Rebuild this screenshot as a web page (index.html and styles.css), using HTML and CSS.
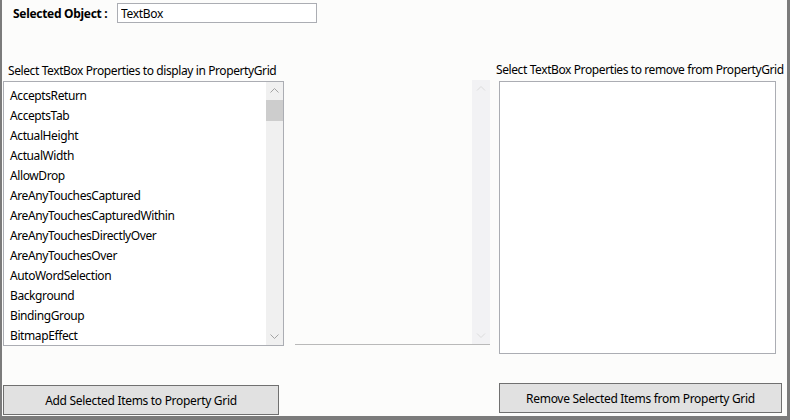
FILE: index.html
```html
<!DOCTYPE html>
<html lang="en">
<head>
    <meta charset="UTF-8">
    <title>PropertyGrid Properties</title>
    <link rel="stylesheet" href="styles.css">
</head>
<body>
    <div class="window">
        <div class="top-row">
            <span class="object-label">Selected Object :</span>
            <input type="text" class="object-input" value="TextBox">
        </div>

        <div class="columns">
            <div class="column column-left">
                <div class="list-title">Select TextBox Properties to display in PropertyGrid</div>
                <div class="listbox listbox-left">
                    <ul class="items">
                        <li>AcceptsReturn</li>
                        <li>AcceptsTab</li>
                        <li>ActualHeight</li>
                        <li>ActualWidth</li>
                        <li>AllowDrop</li>
                        <li>AreAnyTouchesCaptured</li>
                        <li>AreAnyTouchesCapturedWithin</li>
                        <li>AreAnyTouchesDirectlyOver</li>
                        <li>AreAnyTouchesOver</li>
                        <li>AutoWordSelection</li>
                        <li>Background</li>
                        <li>BindingGroup</li>
                        <li>BitmapEffect</li>
                    </ul>
                    <div class="scrollbar">
                        <svg class="arrow" width="17" height="17" viewBox="0 0 17 17">
                            <polyline points="4.5,10.5 8.5,6.5 12.5,10.5" fill="none" stroke="#a3a3a3" stroke-width="1"/>
                        </svg>
                        <div class="thumb"></div>
                        <div class="track"></div>
                        <svg class="arrow" width="17" height="17" viewBox="0 0 17 17">
                            <polyline points="4.5,6.5 8.5,10.5 12.5,6.5" fill="none" stroke="#a3a3a3" stroke-width="1"/>
                        </svg>
                    </div>
                </div>
                <button class="action-btn btn-add">Add Selected Items to Property Grid</button>
            </div>

            <div class="column column-middle">
                <div class="ghost">
                    <div class="ghost-bar">
                        <svg class="arrow" width="18" height="17" viewBox="0 0 18 17">
                            <polyline points="5,10.5 9,6.5 13,10.5" fill="none" stroke="#dcdcdc" stroke-width="1"/>
                        </svg>
                        <div class="track"></div>
                        <svg class="arrow" width="18" height="17" viewBox="0 0 18 17">
                            <polyline points="5,6.5 9,10.5 13,6.5" fill="none" stroke="#dcdcdc" stroke-width="1"/>
                        </svg>
                    </div>
                </div>
                <div class="ghost-line"></div>
            </div>

            <div class="column column-right">
                <div class="list-title">Select TextBox Properties to remove from PropertyGrid</div>
                <div class="listbox listbox-right"></div>
                <button class="action-btn btn-remove">Remove Selected Items from Property Grid</button>
            </div>
        </div>
    </div>
</body>
</html>
```

FILE: styles.css
```css
* {
    box-sizing: border-box;
}

body {
    margin: 0;
    font-family: 'Noto Sans', sans-serif;
    font-size: 12px;
    color: #000;
    background-color: #fff;
}

.window {
    width: 790px;
    height: 420px;
    background-color: #fcfcfb;
    border-left: 2px solid #7b7b7b;
    border-right: 3px solid #7b7b7b;
    border-bottom: 4px solid #7b7b7b;
    display: flex;
    flex-direction: column;
}

.top-row {
    display: flex;
    align-items: center;
    height: 20px;
    margin-top: 3px;
}

.object-label {
    font-weight: bold;
    margin-left: 11px;
    width: 104px;
    letter-spacing: -0.3px;
}

.object-input {
    width: 200px;
    height: 20px;
    border: 1px solid #abadb3;
    background-color: #fff;
    font-family: inherit;
    font-size: 12px;
    padding: 0 3px;
    color: #000;
    letter-spacing: -0.3px;
}

.columns {
    display: flex;
    margin-top: 36px;
    flex: 1;
}

.column {
    display: flex;
    flex-direction: column;
    flex-shrink: 0;
}

.list-title {
    height: 22px;
    padding-top: 2px;
    line-height: 19px;
    white-space: nowrap;
    letter-spacing: -0.4px;
}

/* left side */
.column-left {
    width: 281px;
    margin-left: 1px;
}

.column-left .list-title {
    padding-left: 5px;
}

.listbox {
    border: 1px solid #abadb3;
    background-color: #fff;
}

.listbox-left {
    height: 265px;
    display: flex;
    padding: 4px 0 1px 0;
}

.items {
    list-style: none;
    margin: 0;
    padding: 0 0 0 6px;
    flex: 1;
    overflow: hidden;
}

.items li {
    height: 20px;
    line-height: 20px;
    letter-spacing: -0.4px;
}

.scrollbar {
    width: 17px;
    background-color: #f0f0f0;
    display: flex;
    flex-direction: column;
    margin-top: -4px;
    margin-bottom: -1px;
}

.arrow {
    display: block;
    flex-shrink: 0;
}

.thumb {
    height: 21px;
    margin: 1px 0 0 0;
    background-color: #cdcdcd;
}

.track {
    flex: 1;
}

/* middle leftover area */
.column-middle {
    width: 195px;
    margin-left: 11px;
    padding-top: 21px;
}

.ghost {
    height: 264px;
    display: flex;
    justify-content: flex-end;
}

.ghost-bar {
    width: 18px;
    background-color: #f2f2f4;
    display: flex;
    flex-direction: column;
}

.ghost-line {
    height: 1px;
    background-color: #b9b9b9;
}

/* right side */
.column-right {
    margin-left: 6px;
    flex-shrink: 1;
    min-width: 0;
}

.column-right .list-title {
    padding-top: 1px;
}

.listbox-right {
    margin-left: 3px;
    width: 277px;
    height: 273px;
}

/* buttons */
.action-btn {
    height: 30px;
    background-color: #e1e1e1;
    border: 1px solid #707070;
    font-family: inherit;
    font-size: 12px;
    color: #000;
    padding: 0;
    letter-spacing: -0.3px;
    cursor: pointer;
    flex-shrink: 0;
}

.action-btn:hover {
    background-color: #e5f1fb;
    border-color: #0078d7;
}

.btn-add {
    width: 276px;
    margin-top: 39px;
}

.btn-remove {
    width: 283px;
    margin-left: 3px;
    margin-top: 29px;
}
```
